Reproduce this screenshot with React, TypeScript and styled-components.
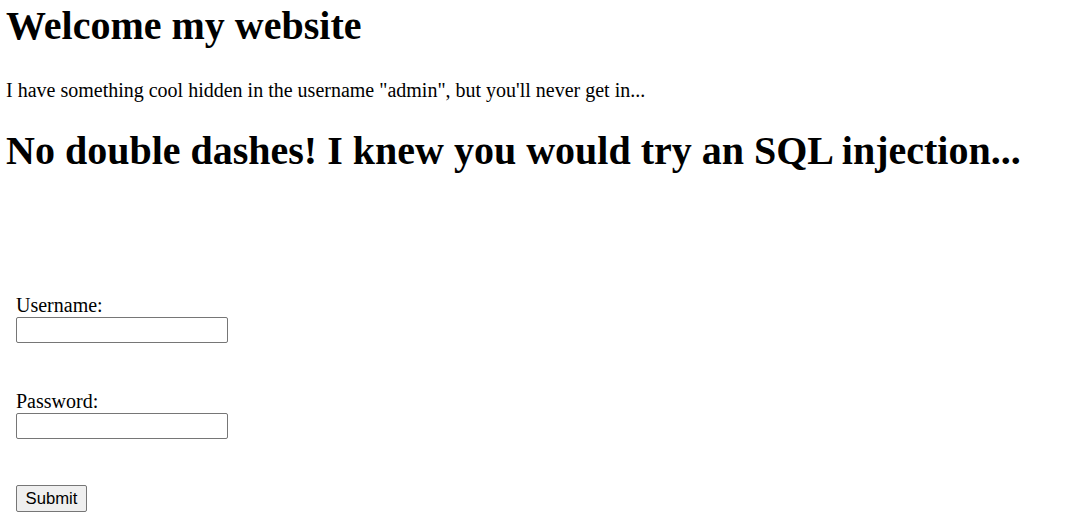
import React from "react";
import styled, { createGlobalStyle } from "styled-components";

const GlobalStyle = createGlobalStyle`
  html, body {
    margin: 0;
    padding: 0;
    background: #ffffff;
  }
  body {
    font-family: "Liberation Serif", "Times New Roman", serif;
    color: #000000;
  }
`;

const Page = styled.main`
  padding: 0 6px;
  display: flow-root;
`;

const Heading = styled.h1<{ $top: number }>`
  font-family: "Liberation Serif", "Times New Roman", serif;
  font-size: 40px;
  font-weight: bold;
  line-height: 46px;
  margin: ${(p) => p.$top}px 0 0;
  white-space: nowrap;
`;

const Intro = styled.p`
  font-size: 20px;
  line-height: 23px;
  margin: 30px 0 0;
`;

const Form = styled.form`
  display: flex;
  flex-direction: column;
  align-items: flex-start;
  margin: 120px 0 0 10px;
  padding-bottom: 20px;
`;

const Field = styled.div`
  display: flex;
  flex-direction: column;
  align-items: flex-start;
  margin-bottom: 47px;
`;

const Label = styled.label`
  font-size: 20px;
  line-height: 23px;
`;

const TextInput = styled.input`
  box-sizing: border-box;
  width: 212px;
  height: 26px;
  border: 1px solid #767676;
  border-radius: 2px;
  padding: 1px 2px;
  font-family: "Liberation Sans", Arial, sans-serif;
  font-size: 16.67px;
  background: #ffffff;
  margin: 0;
`;

const SubmitButton = styled.button`
  box-sizing: border-box;
  width: 71px;
  height: 27px;
  margin-top: -1px;
  border: 1px solid #767676;
  border-radius: 2px;
  background: #efefef;
  color: #000000;
  font-family: "Liberation Sans", Arial, sans-serif;
  font-size: 16.67px;
  padding: 1px 6px;
  cursor: pointer;
`;

export default function App() {
  return (
    <>
      <GlobalStyle />
      <Page>
        <Heading $top={3}>Welcome my website</Heading>
        <Intro>
          I have something cool hidden in the username "admin", but you'll never get in...
        </Intro>
        <Heading $top={26}>No double dashes! I knew you would try an SQL injection...</Heading>
        <Form onSubmit={(e) => e.preventDefault()}>
          <Field>
            <Label htmlFor="username">Username:</Label>
            <TextInput id="username" name="username" type="text" />
          </Field>
          <Field>
            <Label htmlFor="password">Password:</Label>
            <TextInput id="password" name="password" type="password" />
          </Field>
          <SubmitButton type="submit">Submit</SubmitButton>
        </Form>
      </Page>
    </>
  );
}
